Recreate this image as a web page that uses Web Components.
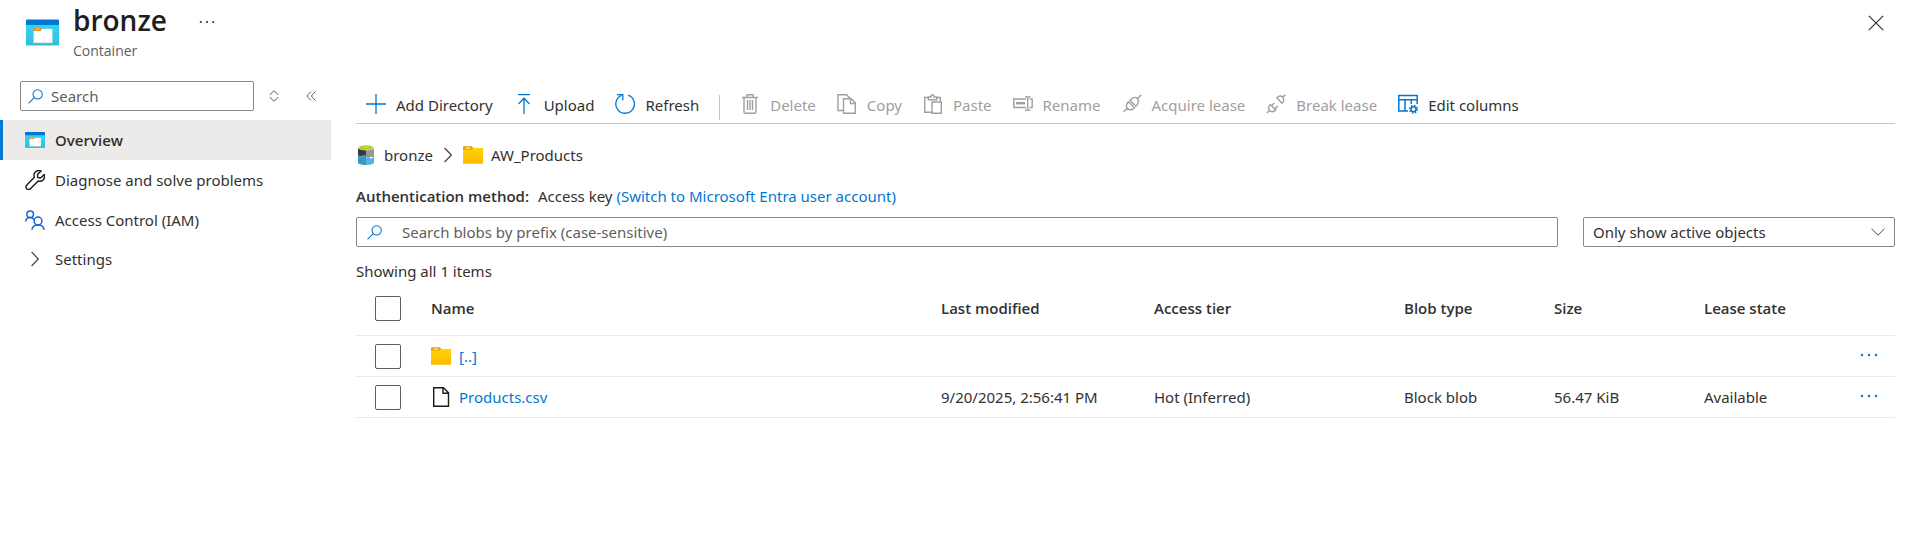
<!DOCTYPE html>
<html lang="en">
<head>
<meta charset="utf-8">
<meta name="viewport" content="width=device-width, initial-scale=1">
<title>bronze - Container</title>
<style>
  body {
    --strong: "Open Sans", "Noto Sans", sans-serif;
    margin: 0;
    background: #fff;
    color: #323130;
    font: 15px/20px "Noto Sans", "Open Sans", sans-serif;
  }
</style>
</head>
<body>
<storage-blade></storage-blade>

<script>
const define = (name, html, setup) => {
  const template = document.createElement('template');
  template.innerHTML = html;
  customElements.define(name, class extends HTMLElement {
    constructor() {
      super();
      this.attachShadow({ mode: 'open' }).append(template.content.cloneNode(true));
    }
    connectedCallback() {
      if (setup) setup(this, this.shadowRoot);
    }
  });
};

const container = `
  <defs><linearGradient id="body" x1="0" y1="0" x2="0" y2="1"><stop offset="0" stop-color="#32d4f5"/><stop offset="1" stop-color="#32bedd"/></linearGradient></defs>
  <path d="M0 6h34v20a1 1 0 0 1-1 1H1a1 1 0 0 1-1-1z" fill="url(#body)"/>
  <path d="M1 0h32a1 1 0 0 1 1 1v5H0V1a1 1 0 0 1 1-1z" fill="#0078d4"/>
  <path d="M8 12v12h19V10H16l-1 2z" fill="#fff" stroke="#f9e2c4" stroke-width=".5"/>
  <path d="M7.500 8.500h7.500l1 1.500-1 2H7.500z" fill="#f78d1e"/>
  <path d="M10 10h4" stroke="#fbc58a"/>`;

const ICONS = {
  container: ['0 0 34 27', container],
  search: ['0 0 16 16', '<g fill="none" stroke="#0078d4" stroke-width="1.100"><circle cx="10.300" cy="5.700" r="5"/><path d="M6.700 9.300.6 15.400"/></g>'],
  sort: ['0 0 10 12', '<path d="M1 5V4.500L5 .8l4 3.700V5M1 7v.5l4 3.700 4-3.700V7" fill="none" stroke="#605e5c"/>'],
  collapse: ['0 0 10 10', '<path d="M5 .5.8 5 5 9.500M9.500.5 5.300 5l4.200 4.500" fill="none" stroke="#605e5c"/>'],
  wrench: ['0 0 20 20', '<path d="M16.100.9 12.600 4.200v2.900l.7.600h2.600l3.300-3.300c.7 2.200.3 4.100-1.100 5.500-1.300 1.300-3.100 1.600-4.900 1.100l-7.800 7.700c-.9.900-2.700.9-3.700 0-1-.9-1-2.600-.1-3.500L9.300 7.200C8.600 5.300 9 3.500 10.400 2.100 11.900.6 14 .2 16.100.9z" fill="none" stroke="#1b1a19" stroke-width="1.400" stroke-linejoin="round"/>'],
  people: ['0 0 20 20', '<g fill="none" stroke="#1664d9" stroke-width="1.500"><circle cx="5.200" cy="4.200" r="3.300"/><circle cx="13" cy="11" r="3.900"/><path d="M.8 11.500C1 9 2.700 7.600 5 7.600c1.800 0 3 .7 3.800 1.900M7 19.800c.2-3 2.500-4.900 6-4.900s5.900 2 6.200 4.900"/></g>'],
  chevron: ['0 0 8 16', '<path d="M.6 1 7.300 8 .6 15" fill="none" stroke="#484644" stroke-width="1.200"/>'],
  down: ['0 0 14 8', '<path d="m.5.8 6.500 6.400L13.500.8" fill="none" stroke="#484644" stroke-width="1"/>'],
  close: ['0 0 16 16', '<path d="m.8.8 14.400 14.400M15.200.8.8 15.200" fill="none" stroke="#323130" stroke-width="1.200"/>'],
  more: ['0 0 18 4', '<g fill="currentColor"><circle cx="2" cy="2" r="1.200"/><circle cx="9" cy="2" r="1.200"/><circle cx="16" cy="2" r="1.200"/></g>'],
  plus: ['0 0 20 20', '<path d="M10 0v20M0 10h20" stroke="#0078d4" stroke-width="1.300"/>'],
  upload: ['0 0 20 20', '<path d="M4 .7h12M10 20V4.500M4.500 10 10 4.200l5.500 5.800" fill="none" stroke="#0078d4" stroke-width="1.300"/>'],
  refresh: ['0 0 20 20', '<path d="M13.200 1.200A9.300 9.300 0 1 1 6.500 1.400M2 .7h5.800v5.800" fill="none" stroke="#0078d4" stroke-width="1.300"/>'],
  trash: ['0 0 20 20', '<path d="M2 3.500h16M7 3V.7h6V3M4 3.500V18c0 .8.500 1.300 1.300 1.300h9.400c.8 0 1.300-.5 1.300-1.300V3.500M7.500 6v10M10 6v10M12.500 6v10" fill="none" stroke="#a19f9d" stroke-width="1.400"/>'],
  copy: ['0 0 20 20', '<path d="M6.500 16.500H1V.7h8.500l4 4M6.500 4.700h7.800l4 4v10.600H6.500zM13.500 5v4.500h4.500" fill="none" stroke="#a19f9d" stroke-width="1.400"/>'],
  paste: ['0 0 20 20', '<path d="M8.500 18.300H1.700V3.500H5M14 3.500h3.300V7M5.300 5.700V3H8c0-1.500.5-2.300 1.500-2.300S11 1.500 11 3h2.700v2.700zM9 8h9.300v11.300H9z" fill="none" stroke="#a19f9d" stroke-width="1.400"/>'],
  rename: ['0 0 20 20', '<path d="M13 5H.8v8.500H13M16.500 5h2.700v8.500h-2.700" fill="none" stroke="#a19f9d" stroke-width="1.400"/><path d="M3 9.200h9" stroke="#a19f9d" stroke-width="2.500"/><path d="M12 2.500c1.700 0 2.700.5 2.700 2v10c0 1.500-1 2-2.700 2m5.500-14c-1.700 0-2.800.5-2.800 2m2.800 12c-1.700 0-2.800-.5-2.800-2" fill="none" stroke="#a19f9d" stroke-width="1.300"/>'],
  acquire: ['0 0 20 20', '<g fill="none" stroke="#a19f9d" stroke-width="1.400"><path d="m1.500 17.800 3.700-3.600M15.500 4.500 19.200.9M5.200 14.200c-1.600-2.200-.8-4.400 1.300-6.400l6 6.200c-2.200 2.200-5 2.300-7.300.2zM8 6.300c2.400-2.800 5-3.900 7.500-1.800 2 2.600 1 5-1.600 7.700z"/></g>'],
  break: ['0 0 20 20', '<g fill="none" stroke="#a19f9d" stroke-width="1.400"><path d="m.8 19 2.700-2.600M16.800 3.200 19.300.8M3.500 16.400c-1.600-2-1-4 .9-5.900l5.400 5.600c-2 2-4.200 2.200-6.300.3zM10.800 3.700c2-2 4-2.400 6-.5 1.700 2.200 1 4.200-.8 6zM5.800 11.500 8.500 9M9 14.800l2.700-2.700"/></g>'],
  columns: ['0 0 20 20', '<g fill="none" stroke="#0078d4" stroke-width="1.500"><path d="M10 17H.8V1.500h18.400V10M.8 5.700h18.400M7 5.700V17M13.300 5.700V10"/><circle cx="15.500" cy="15.300" r="2.500"/><circle cx="15.500" cy="15.300" r="3.700" stroke-dasharray="1.450" stroke-width="1.700"/></g>'],
  storage: ['0 0 16 20', `
    <path d="M0 3h8v8H0z" fill="#3c3b3a"/><path d="M8 3h8v9H8z" fill="#98979a"/>
    <path d="M0 10c2 1 3 2 4.500.5S7 10 8 11v9C3 20 0 19 0 17.500z" fill="#3999c6"/>
    <path d="M8 13c2-2 3-1 4.500.2S15 12 16 11.500v6c0 1.500-3 2.500-8 2.500z" fill="#59b4d9"/>
    <ellipse cx="8" cy="2.700" rx="8" ry="2.700" fill="#dcdcdc"/><ellipse cx="8" cy="2.500" rx="6.500" ry="2" fill="#a4cf0c"/><ellipse cx="8" cy="2" rx="4" ry=".8" fill="#c8e04a"/>`],
  folder: ['0 0 20 18', `
    <defs><linearGradient id="tab" x1="0" y1="0" x2="0" y2="1"><stop offset="0" stop-color="#ffd400"/><stop offset="1" stop-color="#ffb900"/></linearGradient></defs>
    <path d="M0 1.200C0 .5.500.3 1 .3h7.500L10.500 2 8.500 4H0z" fill="#dfa500"/><path d="M2.500 2.100h4.500" stroke="#ffe9a8" stroke-width="1.200"/>
    <path d="M0 3.800h8.500l2-1.800H20v15a.7.700 0 0 1-.7.700H.7A.7.700 0 0 1 0 17z" fill="url(#tab)"/>`],
  file: ['0 0 20 20', '<path d="M2.700.8h9.800l5 5v13.400H2.700zM12 1v5.300h5.300" fill="none" stroke="#1b1a19" stroke-width="1.400"/>'],
};

define('ui-icon', `
  <style>
    :host { display: inline-flex; flex: none; width: 20px; height: 20px; }
    svg { display: block; width: 100%; height: 100%; }
  </style>
  <svg aria-hidden="true"></svg>`, (host, root) => {
  const icon = ICONS[host.getAttribute('name')];
  if (!icon) return;
  const svg = root.querySelector('svg');
  svg.setAttribute('viewBox', icon[0]);
  svg.innerHTML = icon[1];
});

define('search-field', `
  <style>
    :host { display: flex; align-items: center; box-sizing: border-box; height: 30px; padding: 0 7px;
      border: 1px solid #8a8886; border-radius: 2px; gap: var(--field-gap, 8px); background: #fff; }
    ui-icon { width: 15px; height: 15px; }
    input { flex: 1; min-width: 0; border: 0; padding: 0; outline: 0; background: none; font: inherit; color: inherit; }
    input::placeholder { color: #605e5c; opacity: 1; }
  </style>
  <ui-icon name="search"></ui-icon><input type="text">`, (host, root) => {
  const input = root.querySelector('input');
  input.placeholder = host.getAttribute('placeholder');
  input.setAttribute('aria-label', input.placeholder);
});

define('blade-header', `
  <style>
    :host { display: flex; align-items: flex-start; padding: 1px 34px 0 26px; height: 78px; box-sizing: border-box; }
    .logo { width: 33px; height: 27px; margin: 18px 14px 0 0; }
    h1 { margin: 0; font: 600 28px/38px var(--strong); color: #201f1e; }
    p { margin: 0; font: 14px/24px var(--strong); color: #605e5c; }
    button { border: 0; padding: 0; background: none; color: #323130; display: flex; }
    .more { margin: 19px 0 0 32px; }
    .more ui-icon { width: 16px; height: 4px; }
    .close { margin: 14px 0 0 auto; }
    .close ui-icon { width: 16px; height: 16px; }
  </style>
  <ui-icon class="logo" name="container"></ui-icon>
  <div><h1><slot name="title"></slot></h1><p><slot name="kind"></slot></p></div>
  <button class="more" aria-label="More"><ui-icon name="more"></ui-icon></button>
  <button class="close" aria-label="Close"><ui-icon name="close"></ui-icon></button>`);

define('nav-item', `
  <style>
    :host { display: block; }
    a { display: flex; align-items: center; gap: 10px; height: 40px; padding: 0 0 0 25px; color: #323130; text-decoration: none; box-sizing: border-box; }
    ::slotted(ui-icon[name=container]) { height: 16px; }
    ::slotted(ui-icon[name=chevron]) { height: 16px; }
    :host([selected]) a { background: #edebe9; border-left: 3px solid #0078d4; padding-left: 22px; font-family: var(--strong); font-weight: 600; }
    :host([group]) a { height: 38px; }
  </style>
  <a href="#"><slot name="icon"></slot><slot></slot></a>`);

define('side-nav', `
  <style>
    :host { display: block; }
    .tools { display: flex; align-items: center; padding: 3px 0 9px 20px; }
    search-field { width: 234px; }
    button { border: 0; padding: 0; background: none; display: flex; }
    .sort { margin-left: 15px; } .sort ui-icon { width: 10px; height: 12px; }
    .collapse { margin-left: 27px; } .collapse ui-icon { width: 10px; height: 10px; }
  </style>
  <div class="tools">
    <search-field placeholder="Search"></search-field>
    <button class="sort" aria-label="Expand all"><ui-icon name="sort"></ui-icon></button>
    <button class="collapse" aria-label="Collapse menu"><ui-icon name="collapse"></ui-icon></button>
  </div>
  <nav><slot></slot></nav>`);

define('command-button', `
  <style>
    :host { display: block; }
    button { display: flex; align-items: center; gap: 10px; height: 38px; border: 0; padding: 0; background: none; font: inherit; color: #323130; white-space: nowrap; }
    button:disabled { color: #a19f9d; }
    span { padding-top: 2px; }
  </style>
  <button><slot name="icon"></slot><span><slot></slot></span></button>`, (host, root) => {
  root.querySelector('button').disabled = host.hasAttribute('disabled');
});

define('command-bar', `
  <style>
    :host { display: flex; align-items: center; gap: 21px; padding: 7px 10px 0; border-bottom: 1px solid #c8c6c4; }
    ::slotted(hr) { width: 1px; height: 25px; margin: 6px -1px 0; border: 0; background: #c8c6c4; }
  </style>
  <slot></slot>`);

define('path-crumbs', `
  <style>
    :host { display: flex; align-items: center; height: 32px; padding-top: 15px; }
    a { display: flex; align-items: center; gap: 8px; color: inherit; text-decoration: none; }
    .sep { width: 8px; height: 16px; margin: 0 11px; }
    ui-icon[name=folder] { height: 18px; }
  </style>
  <a href="#"><ui-icon name="storage"></ui-icon>bronze</a>
  <ui-icon class="sep" name="chevron"></ui-icon>
  <a href="#"><ui-icon name="folder"></ui-icon>AW_Products</a>`);

define('filter-select', `
  <style>
    :host { display: grid; align-items: center; height: 30px; }
    select, ui-icon { grid-area: 1 / 1; }
    select { appearance: none; width: 100%; height: 30px; border: 1px solid #8a8886; border-radius: 2px; padding: 0 34px 0 9px; background: #fff; font: inherit; color: inherit; }
    ui-icon { justify-self: end; width: 14px; height: 8px; margin-right: 10px; pointer-events: none; }
  </style>
  <select aria-label="Blob visibility"><option>Only show active objects</option></select>
  <ui-icon name="down"></ui-icon>`);

define('blob-table', `
  <style>
    :host { display: block; }
    table { width: 100%; border-collapse: collapse; table-layout: fixed; }
    th, td { text-align: left; padding: 0; border-bottom: 1px solid #edebe9; }
    th { height: 50px; padding-bottom: 2px; font: 600 15px/20px var(--strong); }
    td { height: 40px; }
    .pick { width: 75px; } .date { width: 213px; } .tier { width: 250px; } .type, .size { width: 150px; } .lease { width: 155px; } .menu { width: 36px; }
    input { appearance: none; display: block; box-sizing: border-box; width: 26px; height: 25px; margin: 0 0 0 19px; border: 1px solid #605e5c; border-radius: 2px; background: #fff; }
    a { display: flex; align-items: center; gap: 8px; color: #0078d4; text-decoration: none; }
    ui-icon[name=folder] { height: 18px; }
    button { display: flex; border: 0; padding: 0; margin-bottom: 2px; background: none; color: #0078d4; }
    button ui-icon { width: 20px; height: 4px; }
  </style>
  <table>
    <thead><tr>
      <th class="pick"><input type="checkbox" aria-label="Select all"></th>
      <th>Name</th><th class="date">Last modified</th><th class="tier">Access tier</th>
      <th class="type">Blob type</th><th class="size">Size</th><th class="lease">Lease state</th><th class="menu"></th>
    </tr></thead>
    <tbody>
      <tr>
        <td><input type="checkbox" aria-label="Select parent folder"></td>
        <td><a href="#"><ui-icon name="folder"></ui-icon>[..]</a></td>
        <td></td><td></td><td></td><td></td><td></td>
        <td><button aria-label="Row actions"><ui-icon name="more"></ui-icon></button></td>
      </tr>
      <tr>
        <td><input type="checkbox" aria-label="Select Products.csv"></td>
        <td><a href="#"><ui-icon name="file"></ui-icon>Products.csv</a></td>
        <td>9/20/2025, 2:56:41 PM</td><td>Hot (Inferred)</td><td>Block blob</td><td>56.47 KiB</td><td>Available</td>
        <td><button aria-label="Row actions"><ui-icon name="more"></ui-icon></button></td>
      </tr>
    </tbody>
  </table>`);

define('storage-blade', `
  <style>
    :host { display: block; }
    .body { display: grid; grid-template-columns: 331px minmax(0, 1fr); column-gap: 25px; padding-right: 23px; }
    .auth { margin: 15px 0 11px; }
    .auth b { font-family: var(--strong); font-weight: 600; margin-right: 5px; }
    .auth a { color: #0078d4; text-decoration: none; }
    .filters { display: grid; grid-template-columns: minmax(0, 1fr) 312px; gap: 25px; }
    .filters search-field { --field-gap: 20px; padding-left: 10px; }
    .count { margin: 14px 0 2px; }
  </style>
  <blade-header><span slot="title">bronze</span><span slot="kind">Container</span></blade-header>
  <div class="body">
    <side-nav>
      <nav-item selected><ui-icon slot="icon" name="container"></ui-icon>Overview</nav-item>
      <nav-item><ui-icon slot="icon" name="wrench"></ui-icon>Diagnose and solve problems</nav-item>
      <nav-item><ui-icon slot="icon" name="people"></ui-icon>Access Control (IAM)</nav-item>
      <nav-item group><ui-icon slot="icon" name="chevron"></ui-icon>Settings</nav-item>
    </side-nav>
    <main>
      <command-bar>
        <command-button><ui-icon slot="icon" name="plus"></ui-icon>Add Directory</command-button>
        <command-button><ui-icon slot="icon" name="upload"></ui-icon>Upload</command-button>
        <command-button><ui-icon slot="icon" name="refresh"></ui-icon>Refresh</command-button>
        <hr>
        <command-button disabled><ui-icon slot="icon" name="trash"></ui-icon>Delete</command-button>
        <command-button disabled><ui-icon slot="icon" name="copy"></ui-icon>Copy</command-button>
        <command-button disabled><ui-icon slot="icon" name="paste"></ui-icon>Paste</command-button>
        <command-button disabled><ui-icon slot="icon" name="rename"></ui-icon>Rename</command-button>
        <command-button disabled><ui-icon slot="icon" name="acquire"></ui-icon>Acquire lease</command-button>
        <command-button disabled><ui-icon slot="icon" name="break"></ui-icon>Break lease</command-button>
        <command-button><ui-icon slot="icon" name="columns"></ui-icon>Edit columns</command-button>
      </command-bar>
      <path-crumbs></path-crumbs>
      <p class="auth"><b>Authentication method:</b> Access key <a href="#">(Switch to Microsoft Entra user account)</a></p>
      <div class="filters">
        <search-field placeholder="Search blobs by prefix (case-sensitive)"></search-field>
        <filter-select></filter-select>
      </div>
      <p class="count">Showing all 1 items</p>
      <blob-table></blob-table>
    </main>
  </div>`);
</script>
</body>
</html>
